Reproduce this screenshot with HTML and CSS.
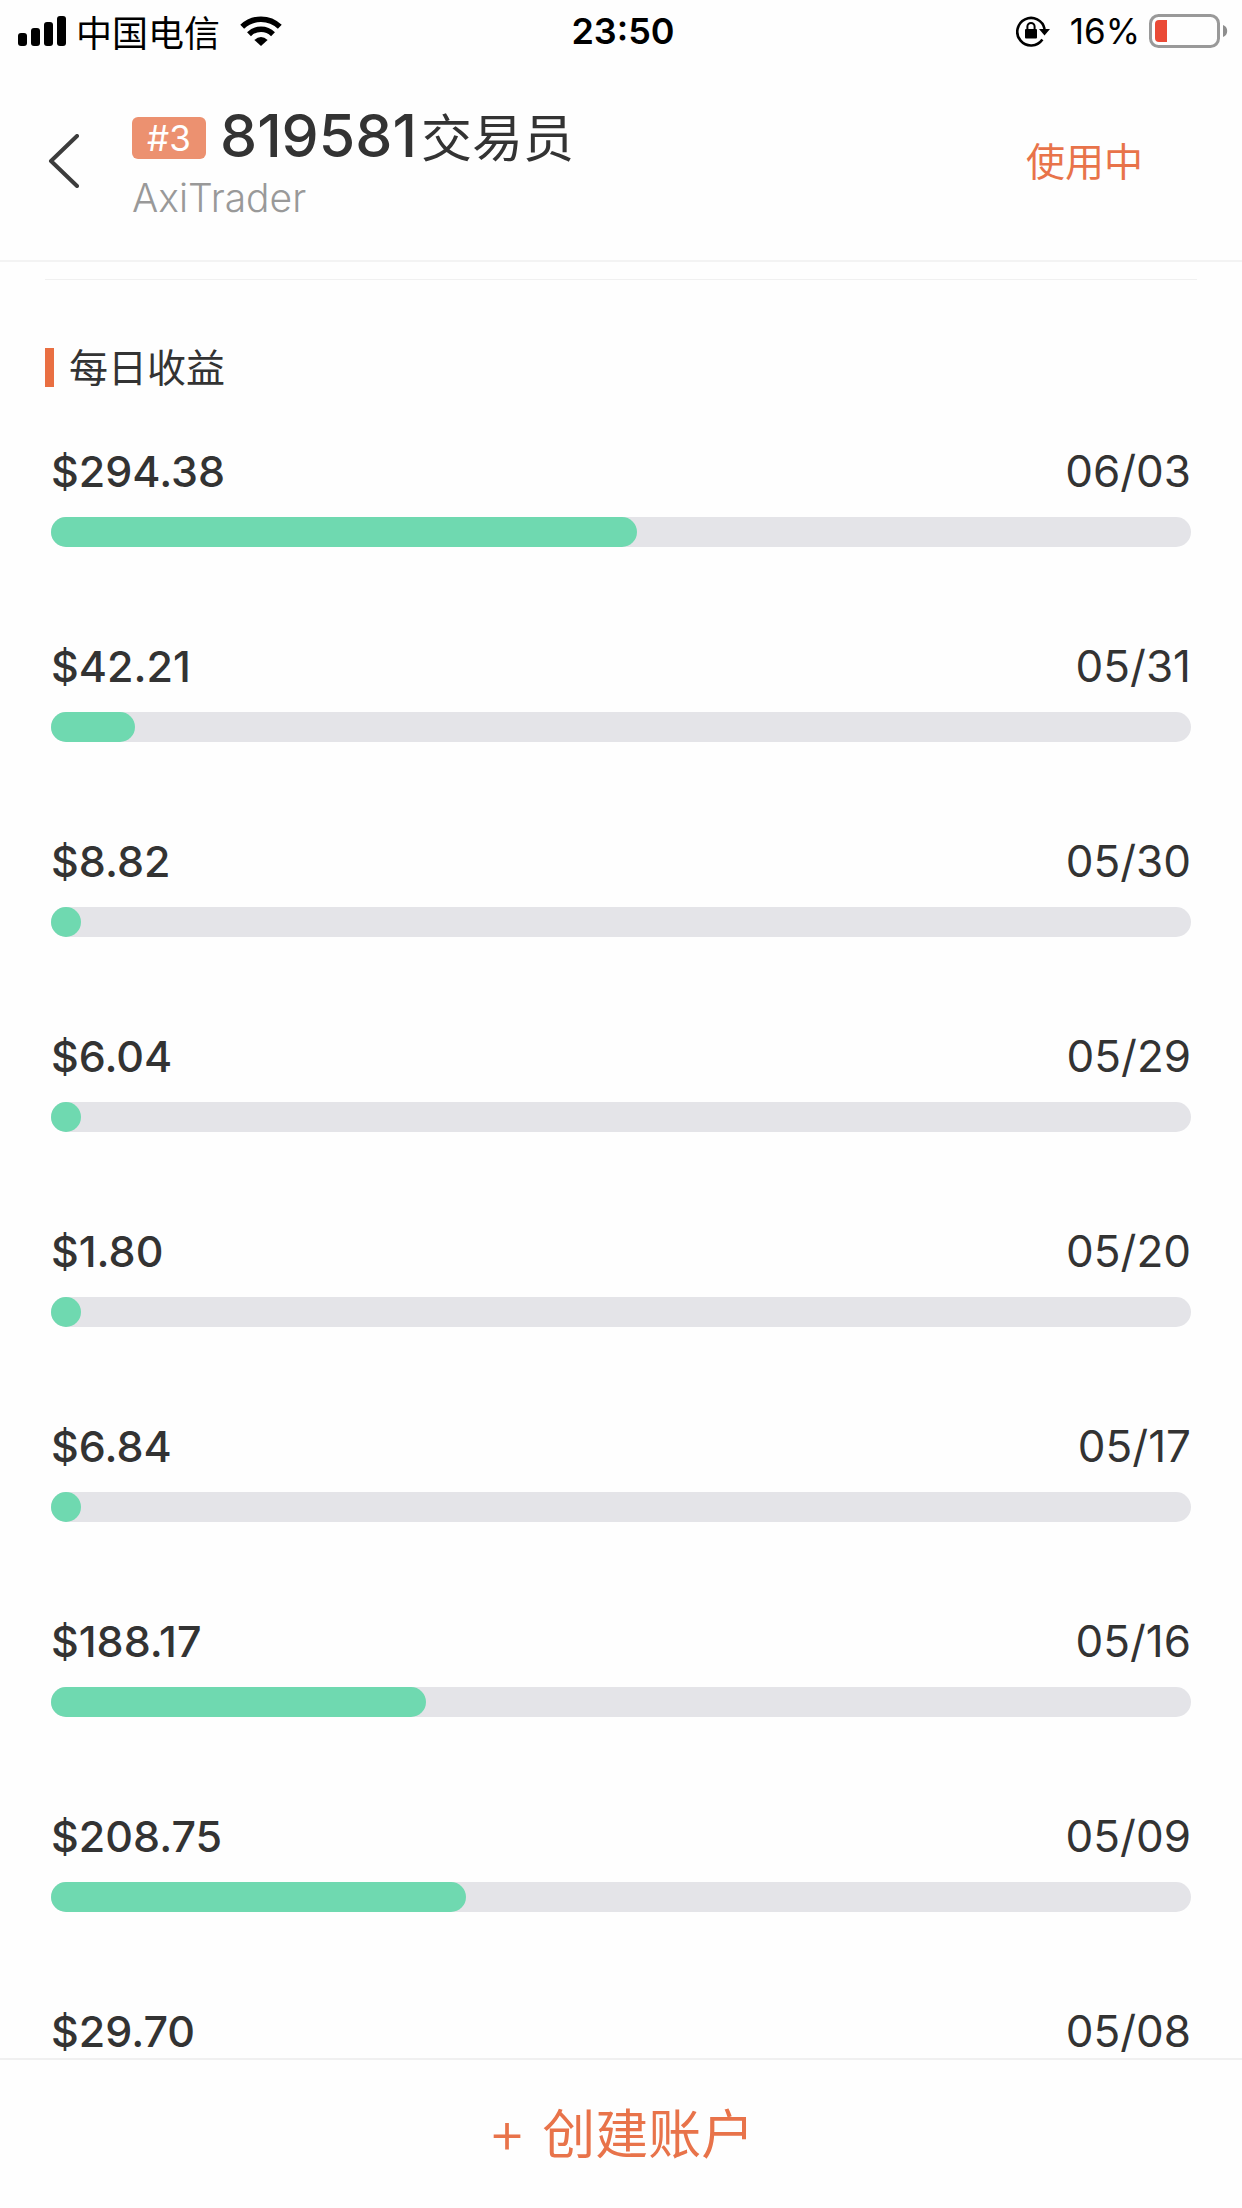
FILE: index.html
```html
<!DOCTYPE html>
<html lang="zh-CN">
<head>
  <meta charset="UTF-8">
  <meta name="viewport" content="width=device-width,initial-scale=1.0">
  <title>819581交易员</title>
  <link rel="stylesheet" href="styles.css">
</head>
<body>
  <div class="app">
    <!-- 状态栏 -->
    <div class="status-bar">
      <div class="status-left">
        <svg class="signal" width="48" height="30" viewBox="0 0 48 30">
          <rect x="0" y="17" width="9" height="13" rx="3"/>
          <rect x="13" y="12" width="9" height="18" rx="3"/>
          <rect x="26" y="6" width="9" height="24" rx="3"/>
          <rect x="39" y="0" width="9" height="30" rx="3"/>
        </svg>
        <span class="carrier">中国电信</span>
        <svg class="wifi" width="42" height="30" viewBox="0 0 42 30">
          <path d="M2.2 10.8A27 27 0 0 1 39.8 10.8" fill="none" stroke="#000" stroke-width="5.5"/>
          <path d="M9 18.2A17 17 0 0 1 33 18.2" fill="none" stroke="#000" stroke-width="5.5"/>
          <path d="M14.4 24Q21 18.2 27.6 24L21 30Z"/>
        </svg>
      </div>
      <div class="status-time">23:50</div>
      <div class="status-right">
        <svg class="lock" width="34" height="32" viewBox="0 0 34 32">
          <path d="M26.4 24.6A13.8 13.8 0 1 1 28.6 14" fill="none" stroke="#000" stroke-width="2.6"/>
          <path d="M23 14H34L28.5 20.5Z"/>
          <rect x="9" y="14" width="12" height="9.5" rx="1"/>
          <path d="M11.4 15V11.5a3.6 3.6 0 0 1 7.2 0V15" fill="none" stroke="#000" stroke-width="2"/>
        </svg>
        <span class="battery-text">16%</span>
        <svg class="battery" width="79" height="34" viewBox="0 0 79 34">
          <rect x="1.5" y="1.5" width="68" height="31" rx="8" fill="none" stroke="#999" stroke-width="3"/>
          <path d="M18 6v22h-8a4 4 0 0 1-4-4V10a4 4 0 0 1 4-4z" fill="#ea4a36"/>
          <path d="M74 11a6.4 6.4 0 0 1 0 12z" fill="#8e8e8e"/>
        </svg>
      </div>
    </div>

    <!-- 顶部导航 -->
    <header class="header">
      <button class="back-btn" type="button" aria-label="返回">
        <svg width="32" height="54" viewBox="0 0 32 54">
          <path d="M29 2L3 27L29 52" fill="none" stroke="#3c3c3c" stroke-width="4" stroke-linecap="round" stroke-linejoin="round"/>
        </svg>
      </button>
      <div class="trader">
        <div class="trader-name">
          <span class="rank">#3</span>
          <h1><span class="trader-id">819581</span>交易员</h1>
        </div>
        <p class="broker">AxiTrader</p>
      </div>
      <span class="using">使用中</span>
    </header>

    <!-- 每日收益 -->
    <main class="content">
      <section class="daily">
        <h2>每日收益</h2>
        <ul class="profit-list">
          <li>
            <div class="profit-info"><span class="amount">$294.38</span><span class="date">06/03</span></div>
            <div class="track"><div class="fill" style="width:51.4%"></div></div>
          </li>
          <li>
            <div class="profit-info"><span class="amount">$42.21</span><span class="date">05/31</span></div>
            <div class="track"><div class="fill" style="width:7.4%"></div></div>
          </li>
          <li>
            <div class="profit-info"><span class="amount">$8.82</span><span class="date">05/30</span></div>
            <div class="track"><div class="fill" style="width:1.5%"></div></div>
          </li>
          <li>
            <div class="profit-info"><span class="amount">$6.04</span><span class="date">05/29</span></div>
            <div class="track"><div class="fill" style="width:1.1%"></div></div>
          </li>
          <li>
            <div class="profit-info"><span class="amount">$1.80</span><span class="date">05/20</span></div>
            <div class="track"><div class="fill" style="width:0.3%"></div></div>
          </li>
          <li>
            <div class="profit-info"><span class="amount">$6.84</span><span class="date">05/17</span></div>
            <div class="track"><div class="fill" style="width:1.2%"></div></div>
          </li>
          <li>
            <div class="profit-info"><span class="amount">$188.17</span><span class="date">05/16</span></div>
            <div class="track"><div class="fill" style="width:32.9%"></div></div>
          </li>
          <li>
            <div class="profit-info"><span class="amount">$208.75</span><span class="date">05/09</span></div>
            <div class="track"><div class="fill" style="width:36.4%"></div></div>
          </li>
          <li>
            <div class="profit-info"><span class="amount">$29.70</span><span class="date">05/08</span></div>
            <div class="track"><div class="fill" style="width:5.2%"></div></div>
          </li>
        </ul>
      </section>
    </main>

    <!-- 底部按钮 -->
    <footer class="footer">
      <button class="create-btn" type="button"><span class="plus">+</span>创建账户</button>
    </footer>
  </div>
</body>
</html>
```
FILE: styles.css
```css
/* 重置 */
* {
  margin: 0;
  padding: 0;
  box-sizing: border-box;
}
body {
  font-family: Inter, "Noto Sans CJK SC", sans-serif;
  background-color: #fefefe;
  color: #333;
}
button {
  background: none;
  border: none;
  font-family: inherit;
  cursor: pointer;
}
svg {
  display: block;
}
.app {
  display: flex;
  flex-direction: column;
  height: 100vh;
}

/* 状态栏 */
.status-bar {
  display: grid;
  grid-template-columns: 1fr auto 1fr;
  align-items: center;
  height: 61px;
  padding: 0 14px 0 18px;
  font-size: 36px;
  color: #000;
}
.status-left,
.status-right {
  display: flex;
  align-items: center;
}
.status-right {
  justify-content: flex-end;
}
.carrier {
  margin: 0 20px 0 10px;
}
.status-time {
  font-weight: 600;
}
.battery-text {
  margin: 0 9px 0 20px;
  font-size: 35px;
}

/* 顶部导航 */
.header {
  display: flex;
  align-items: center;
  height: 201px;
  padding: 0 99px 0 48px;
  border-bottom: 2px solid #f3f3f3;
}
.trader {
  flex: 1;
  margin-left: 52px;
  padding-top: 6px;
}
.trader-name {
  display: flex;
  align-items: center;
  gap: 14px;
}
.rank {
  width: 74px;
  border-radius: 6px;
  background-color: #ec9170;
  color: #fff;
  font-size: 35px;
  line-height: 42px;
  text-align: center;
}
h1 {
  font-size: 51px;
  font-weight: 400;
  line-height: 66px;
}
.trader-id {
  margin-right: 4px;
  font-size: 59px;
  font-weight: 500;
}
.broker {
  color: #999;
  font-size: 39px;
  font-weight: 300;
  line-height: 52px;
}
.using {
  padding-bottom: 4px;
  color: #e8734a;
  font-size: 39px;
}

/* 每日收益 */
.content {
  flex: 1;
  min-height: 0;
  overflow: hidden;
  padding: 17px 45px 0;
}
.daily {
  border-top: 1px solid #f0f0f0;
  padding-top: 68px;
}
h2 {
  border-left: 9px solid #e96f42;
  padding-left: 15px;
  font-size: 39px;
  font-weight: 400;
  line-height: 39px;
}
.profit-list {
  list-style: none;
  margin-top: 54px;
  padding: 0 6px;
}
.profit-list li {
  margin-bottom: 89px;
}
.profit-info {
  display: flex;
  justify-content: space-between;
  margin-bottom: 16px;
  font-size: 44px;
  line-height: 60px;
}
.amount {
  font-size: 43px;
  font-weight: 500;
}
.track {
  height: 30px;
  border-radius: 15px;
  background-color: #e4e4e8;
}
.fill {
  min-width: 30px;
  height: 30px;
  border-radius: 15px;
  background-color: #6fd9b0;
}

/* 底部按钮 */
.footer {
  height: 150px;
  border-top: 2px solid #f0f0f0;
}
.create-btn {
  display: flex;
  align-items: center;
  justify-content: center;
  gap: 16px;
  width: 100%;
  height: 100%;
  padding-bottom: 6px;
  color: #e8734a;
  font-size: 53px;
}
.plus {
  font-size: 59px;
  font-weight: 300;
}
```
